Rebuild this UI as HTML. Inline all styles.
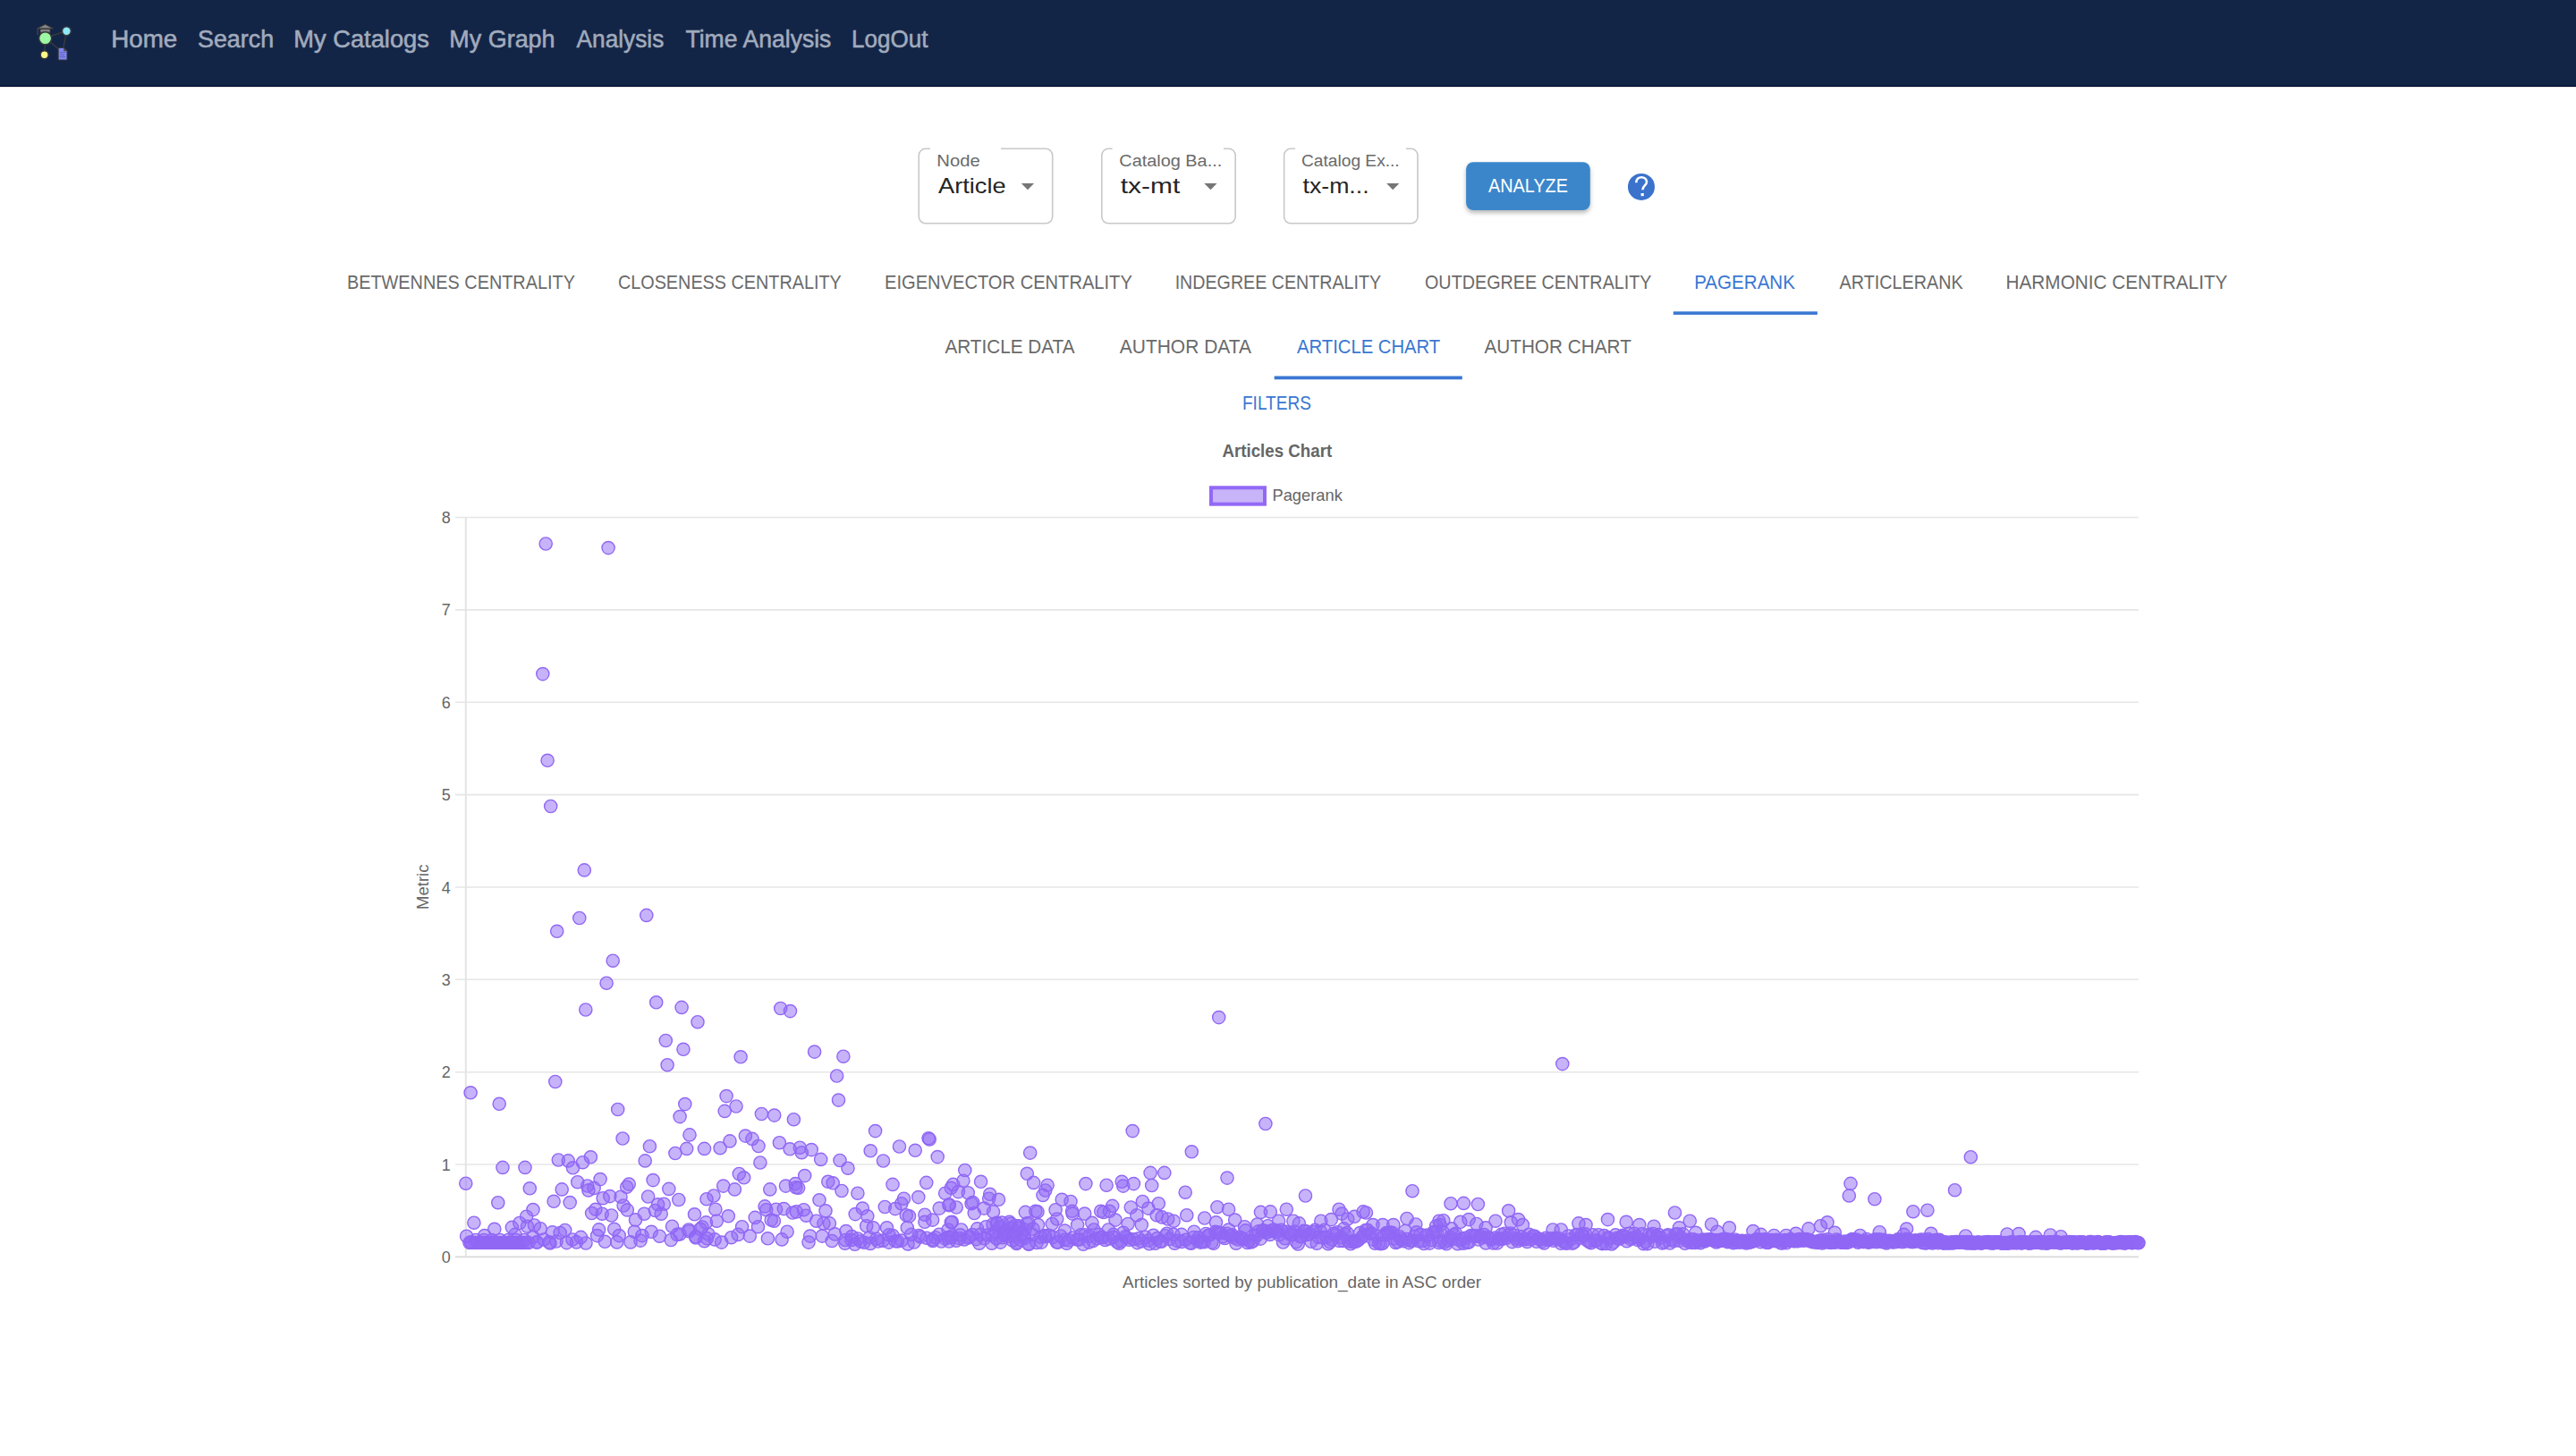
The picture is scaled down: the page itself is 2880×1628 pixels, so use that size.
<!DOCTYPE html>
<html><head><meta charset="utf-8"><style>
html,body{margin:0;padding:0;background:#fff;width:100%;height:100%;overflow:hidden}
svg{position:absolute;left:0;top:0;display:block;width:100vw;height:100vh}
text{font-family:"Liberation Sans",sans-serif}
</style></head><body>
<svg width="2880" height="1628" viewBox="0 0 2880 1628" preserveAspectRatio="none">
<rect x="0" y="0" width="2880" height="96" fill="#132547"/>
<rect x="0" y="95.8" width="2880" height="1.3" fill="#020e30"/>
<g stroke="#3a3a3a" stroke-width="1.4">
<line x1="50.6" y1="42.5" x2="74.5" y2="34.6"/>
<line x1="50.6" y1="42.5" x2="67" y2="56"/>
<line x1="74.5" y1="34.6" x2="71" y2="53"/>
<line x1="50.6" y1="42.5" x2="50" y2="58"/>
<path d="M41.3 31.9 L50.5 27.3 L59.7 31.9 Z" fill="#868686" stroke-width="1"/>
<rect x="45" y="32.5" width="11" height="3.8" fill="#848484" stroke-width="0.9"/>
<line x1="42.1" y1="32" x2="42.1" y2="39" stroke="#474747" stroke-width="1.3"/>
<circle cx="50.6" cy="42.8" r="7" fill="#9cf8a4"/>
<circle cx="74.4" cy="34.8" r="4.9" fill="#8ee8f8"/>
<circle cx="49.7" cy="61.3" r="4.4" fill="#fefa8a"/>
<path d="M65.2 53.5 L71.2 53.5 L75 57 L75 67 L65.2 67 Z" fill="#7f86f4" stroke-width="1"/>
<path d="M71.2 53.5 L75 57.2 L71.2 57.2 Z" fill="#4a4a4a" stroke="none"/>
<line x1="66.8" y1="58.7" x2="73" y2="58.7" stroke="#5a5fb0" stroke-width="0.9"/>
<line x1="66.8" y1="61.3" x2="72" y2="61.3" stroke="#5a5fb0" stroke-width="0.9"/>
<line x1="66.8" y1="63.6" x2="73" y2="63.6" stroke="#5a5fb0" stroke-width="0.9"/>
</g>
<rect x="1027.3" y="166.3" width="149.4" height="83.5" rx="7.5" fill="none" stroke="#c8c8c8" stroke-width="1.6"/>
<rect x="1039.8" y="163" width="79.2" height="7" fill="#fff"/>
<path d="M1141.8 205.1 L1156.1 205.1 L1149.0 212.3 Z" fill="#767676"/>
<rect x="1231.8" y="166.3" width="149.4" height="83.5" rx="7.5" fill="none" stroke="#c8c8c8" stroke-width="1.6"/>
<rect x="1243.6" y="163" width="124.4" height="7" fill="#fff"/>
<path d="M1346.3 205.1 L1360.6 205.1 L1353.5 212.3 Z" fill="#767676"/>
<rect x="1435.6" y="166.3" width="149.4" height="83.5" rx="7.5" fill="none" stroke="#c8c8c8" stroke-width="1.6"/>
<rect x="1448.0" y="163" width="124.0" height="7" fill="#fff"/>
<path d="M1550.1 205.1 L1564.4 205.1 L1557.2 212.3 Z" fill="#767676"/>
<defs><filter id="sh" x="-20%" y="-30%" width="140%" height="170%"><feDropShadow dx="0" dy="3" stdDeviation="2.5" flood-color="#000" flood-opacity="0.28"/></filter></defs>
<rect x="1639.1" y="181.2" width="138.7" height="53.8" rx="8" fill="#3b86cb" filter="url(#sh)"/>
<circle cx="1835" cy="208.9" r="15" fill="#3a72cc"/>
<path d="M1829.3 204.2 C1829.3 200.3 1832 198.2 1835.2 198.2 C1838.6 198.2 1841 200.4 1841 203.4 C1841 207.2 1836.4 207.6 1836.4 212.3" fill="none" stroke="#fff" stroke-width="2.6"/>
<rect x="1834.6" y="216" width="3.2" height="3.2" fill="#fff"/>
<rect x="1870.8" y="348.3" width="161.1" height="3.6" fill="#3a77d2"/>
<rect x="1424.7" y="420.5" width="210.1" height="3.8" fill="#3a77d2"/>

<line x1="509" y1="1405.40" x2="2391" y2="1405.40" stroke="#d9d9d9" stroke-width="1.6"/>
<line x1="509" y1="1302.04" x2="2391" y2="1302.04" stroke="#e6e6e6" stroke-width="1.6"/>
<line x1="509" y1="1198.68" x2="2391" y2="1198.68" stroke="#e6e6e6" stroke-width="1.6"/>
<line x1="509" y1="1095.32" x2="2391" y2="1095.32" stroke="#e6e6e6" stroke-width="1.6"/>
<line x1="509" y1="991.96" x2="2391" y2="991.96" stroke="#e6e6e6" stroke-width="1.6"/>
<line x1="509" y1="888.60" x2="2391" y2="888.60" stroke="#e6e6e6" stroke-width="1.6"/>
<line x1="509" y1="785.24" x2="2391" y2="785.24" stroke="#e6e6e6" stroke-width="1.6"/>
<line x1="509" y1="681.88" x2="2391" y2="681.88" stroke="#e6e6e6" stroke-width="1.6"/>
<line x1="509" y1="578.52" x2="2391" y2="578.52" stroke="#e6e6e6" stroke-width="1.6"/>
<line x1="520.8" y1="578.5" x2="520.8" y2="1405.4" stroke="#e4e4e4" stroke-width="2"/>
<text x="503.7" y="1411.9" font-size="18" fill="#666" text-anchor="end">0</text>
<text x="503.7" y="1308.5" font-size="18" fill="#666" text-anchor="end">1</text>
<text x="503.7" y="1205.2" font-size="18" fill="#666" text-anchor="end">2</text>
<text x="503.7" y="1101.8" font-size="18" fill="#666" text-anchor="end">3</text>
<text x="503.7" y="998.5" font-size="18" fill="#666" text-anchor="end">4</text>
<text x="503.7" y="895.1" font-size="18" fill="#666" text-anchor="end">5</text>
<text x="503.7" y="791.7" font-size="18" fill="#666" text-anchor="end">6</text>
<text x="503.7" y="688.4" font-size="18" fill="#666" text-anchor="end">7</text>
<text x="503.7" y="585.0" font-size="18" fill="#666" text-anchor="end">8</text>
<text transform="translate(479.1,1017) rotate(-90)" font-size="18.4" fill="#666" textLength="50.5" lengthAdjust="spacingAndGlyphs">Metric</text>
<rect x="1354" y="545.3" width="60" height="18.4" fill="#c8b4f8" stroke="#9368f5" stroke-width="4"/>
<g fill="rgba(144,103,245,0.5)" stroke="rgb(144,103,245)" stroke-width="1.4"><circle cx="520.8" cy="1323.2" r="7.1"/><circle cx="521.6" cy="1382.2" r="7.1"/><circle cx="525.0" cy="1389.5" r="7.1"/><circle cx="526.1" cy="1221.8" r="7.1"/><circle cx="526.5" cy="1388.9" r="7.1"/><circle cx="528.0" cy="1389.5" r="7.1"/><circle cx="529.9" cy="1367.2" r="7.1"/><circle cx="531.0" cy="1389.5" r="7.1"/><circle cx="532.0" cy="1386.5" r="7.1"/><circle cx="534.0" cy="1389.5" r="7.1"/><circle cx="537.0" cy="1389.5" r="7.1"/><circle cx="540.0" cy="1389.5" r="7.1"/><circle cx="541.0" cy="1386.5" r="7.1"/><circle cx="541.8" cy="1381.6" r="7.1"/><circle cx="543.0" cy="1389.5" r="7.1"/><circle cx="546.0" cy="1389.5" r="7.1"/><circle cx="549.0" cy="1389.5" r="7.1"/><circle cx="550.0" cy="1386.5" r="7.1"/><circle cx="552.0" cy="1389.5" r="7.1"/><circle cx="552.8" cy="1374.3" r="7.1"/><circle cx="555.0" cy="1389.5" r="7.1"/><circle cx="556.8" cy="1344.7" r="7.1"/><circle cx="558.0" cy="1389.5" r="7.1"/><circle cx="558.2" cy="1234.3" r="7.1"/><circle cx="559.0" cy="1386.5" r="7.1"/><circle cx="561.0" cy="1389.5" r="7.1"/><circle cx="562.0" cy="1305.4" r="7.1"/><circle cx="564.0" cy="1389.5" r="7.1"/><circle cx="567.0" cy="1389.5" r="7.1"/><circle cx="568.0" cy="1386.5" r="7.1"/><circle cx="570.0" cy="1389.5" r="7.1"/><circle cx="572.4" cy="1372.4" r="7.1"/><circle cx="573.0" cy="1389.5" r="7.1"/><circle cx="576.0" cy="1380.4" r="7.1"/><circle cx="576.0" cy="1389.5" r="7.1"/><circle cx="577.0" cy="1386.5" r="7.1"/><circle cx="579.0" cy="1389.5" r="7.1"/><circle cx="580.9" cy="1367.5" r="7.1"/><circle cx="582.0" cy="1389.5" r="7.1"/><circle cx="585.0" cy="1389.5" r="7.1"/><circle cx="586.0" cy="1386.5" r="7.1"/><circle cx="587.0" cy="1305.4" r="7.1"/><circle cx="588.0" cy="1389.5" r="7.1"/><circle cx="588.6" cy="1360.2" r="7.1"/><circle cx="589.5" cy="1371.2" r="7.1"/><circle cx="591.0" cy="1389.5" r="7.1"/><circle cx="592.3" cy="1328.8" r="7.1"/><circle cx="596.0" cy="1352.6" r="7.1"/><circle cx="596.0" cy="1383.0" r="7.1"/><circle cx="597.4" cy="1370.0" r="7.1"/><circle cx="600.0" cy="1389.0" r="7.1"/><circle cx="600.5" cy="1388.9" r="7.1"/><circle cx="604.1" cy="1373.7" r="7.1"/><circle cx="606.8" cy="753.6" r="7.1"/><circle cx="608.0" cy="1386.0" r="7.1"/><circle cx="610.2" cy="608.0" r="7.1"/><circle cx="612.1" cy="850.3" r="7.1"/><circle cx="613.9" cy="1388.9" r="7.1"/><circle cx="615.0" cy="1390.0" r="7.1"/><circle cx="615.7" cy="901.5" r="7.1"/><circle cx="617.6" cy="1377.9" r="7.1"/><circle cx="619.1" cy="1343.3" r="7.1"/><circle cx="620.8" cy="1209.5" r="7.1"/><circle cx="622.0" cy="1388.0" r="7.1"/><circle cx="622.7" cy="1041.3" r="7.1"/><circle cx="624.3" cy="1297.0" r="7.1"/><circle cx="626.2" cy="1378.5" r="7.1"/><circle cx="628.2" cy="1329.9" r="7.1"/><circle cx="631.7" cy="1375.5" r="7.1"/><circle cx="633.5" cy="1389.6" r="7.1"/><circle cx="635.3" cy="1297.9" r="7.1"/><circle cx="637.2" cy="1344.6" r="7.1"/><circle cx="640.0" cy="1386.0" r="7.1"/><circle cx="640.5" cy="1305.8" r="7.1"/><circle cx="644.5" cy="1388.9" r="7.1"/><circle cx="645.7" cy="1321.7" r="7.1"/><circle cx="647.8" cy="1026.5" r="7.1"/><circle cx="649.4" cy="1383.4" r="7.1"/><circle cx="651.5" cy="1299.7" r="7.1"/><circle cx="653.3" cy="972.9" r="7.1"/><circle cx="654.8" cy="1129.0" r="7.1"/><circle cx="655.0" cy="1390.0" r="7.1"/><circle cx="656.7" cy="1326.0" r="7.1"/><circle cx="657.9" cy="1330.9" r="7.1"/><circle cx="660.4" cy="1293.8" r="7.1"/><circle cx="661.6" cy="1356.5" r="7.1"/><circle cx="664.1" cy="1328.4" r="7.1"/><circle cx="665.9" cy="1352.3" r="7.1"/><circle cx="667.7" cy="1381.6" r="7.1"/><circle cx="669.6" cy="1374.9" r="7.1"/><circle cx="671.1" cy="1318.6" r="7.1"/><circle cx="673.2" cy="1357.2" r="7.1"/><circle cx="674.2" cy="1339.7" r="7.1"/><circle cx="676.3" cy="1388.3" r="7.1"/><circle cx="678.1" cy="1099.2" r="7.1"/><circle cx="680.1" cy="612.6" r="7.1"/><circle cx="681.8" cy="1337.6" r="7.1"/><circle cx="683.6" cy="1359.0" r="7.1"/><circle cx="685.2" cy="1074.2" r="7.1"/><circle cx="686.7" cy="1374.3" r="7.1"/><circle cx="689.7" cy="1388.9" r="7.1"/><circle cx="690.7" cy="1240.5" r="7.1"/><circle cx="692.2" cy="1381.6" r="7.1"/><circle cx="694.0" cy="1338.2" r="7.1"/><circle cx="696.1" cy="1273.0" r="7.1"/><circle cx="697.1" cy="1348.0" r="7.1"/><circle cx="700.7" cy="1327.2" r="7.1"/><circle cx="701.3" cy="1352.9" r="7.1"/><circle cx="703.2" cy="1324.1" r="7.1"/><circle cx="705.0" cy="1388.9" r="7.1"/><circle cx="709.3" cy="1377.3" r="7.1"/><circle cx="710.5" cy="1363.9" r="7.1"/><circle cx="716.0" cy="1387.1" r="7.1"/><circle cx="717.9" cy="1381.6" r="7.1"/><circle cx="720.3" cy="1357.2" r="7.1"/><circle cx="721.2" cy="1297.9" r="7.1"/><circle cx="722.8" cy="1023.4" r="7.1"/><circle cx="724.6" cy="1338.0" r="7.1"/><circle cx="726.4" cy="1281.7" r="7.1"/><circle cx="728.2" cy="1377.3" r="7.1"/><circle cx="730.1" cy="1319.6" r="7.1"/><circle cx="732.5" cy="1353.5" r="7.1"/><circle cx="733.7" cy="1120.8" r="7.1"/><circle cx="735.6" cy="1346.8" r="7.1"/><circle cx="737.4" cy="1382.2" r="7.1"/><circle cx="739.2" cy="1357.2" r="7.1"/><circle cx="742.3" cy="1346.2" r="7.1"/><circle cx="744.3" cy="1163.5" r="7.1"/><circle cx="746.1" cy="1190.7" r="7.1"/><circle cx="747.8" cy="1329.4" r="7.1"/><circle cx="750.2" cy="1386.5" r="7.1"/><circle cx="751.5" cy="1371.2" r="7.1"/><circle cx="754.9" cy="1289.5" r="7.1"/><circle cx="757.0" cy="1380.4" r="7.1"/><circle cx="758.8" cy="1341.5" r="7.1"/><circle cx="760.0" cy="1380.0" r="7.1"/><circle cx="760.1" cy="1248.6" r="7.1"/><circle cx="762.1" cy="1126.4" r="7.1"/><circle cx="764.0" cy="1173.3" r="7.1"/><circle cx="765.8" cy="1234.6" r="7.1"/><circle cx="767.7" cy="1284.4" r="7.1"/><circle cx="770.0" cy="1375.0" r="7.1"/><circle cx="770.4" cy="1376.7" r="7.1"/><circle cx="771.0" cy="1268.9" r="7.1"/><circle cx="776.5" cy="1357.8" r="7.1"/><circle cx="777.8" cy="1382.8" r="7.1"/><circle cx="778.0" cy="1384.0" r="7.1"/><circle cx="780.0" cy="1142.7" r="7.1"/><circle cx="782.7" cy="1374.3" r="7.1"/><circle cx="785.0" cy="1372.0" r="7.1"/><circle cx="787.5" cy="1284.4" r="7.1"/><circle cx="787.5" cy="1387.7" r="7.1"/><circle cx="789.4" cy="1366.9" r="7.1"/><circle cx="790.0" cy="1340.7" r="7.1"/><circle cx="790.4" cy="1384.8" r="7.1"/><circle cx="792.0" cy="1380.0" r="7.1"/><circle cx="798.0" cy="1337.0" r="7.1"/><circle cx="799.1" cy="1385.9" r="7.1"/><circle cx="799.9" cy="1352.2" r="7.1"/><circle cx="801.3" cy="1365.2" r="7.1"/><circle cx="805.1" cy="1283.7" r="7.1"/><circle cx="806.7" cy="1389.1" r="7.1"/><circle cx="808.7" cy="1326.1" r="7.1"/><circle cx="810.2" cy="1242.4" r="7.1"/><circle cx="812.1" cy="1225.6" r="7.1"/><circle cx="814.3" cy="1359.8" r="7.1"/><circle cx="816.0" cy="1275.9" r="7.1"/><circle cx="817.6" cy="1383.7" r="7.1"/><circle cx="821.4" cy="1329.9" r="7.1"/><circle cx="823.0" cy="1237.0" r="7.1"/><circle cx="825.2" cy="1380.4" r="7.1"/><circle cx="826.3" cy="1312.5" r="7.1"/><circle cx="828.1" cy="1181.8" r="7.1"/><circle cx="829.6" cy="1371.7" r="7.1"/><circle cx="831.7" cy="1316.8" r="7.1"/><circle cx="833.4" cy="1270.1" r="7.1"/><circle cx="838.3" cy="1382.1" r="7.1"/><circle cx="841.0" cy="1273.4" r="7.1"/><circle cx="844.2" cy="1361.4" r="7.1"/><circle cx="847.5" cy="1371.7" r="7.1"/><circle cx="848.0" cy="1281.5" r="7.1"/><circle cx="849.9" cy="1300.0" r="7.1"/><circle cx="851.4" cy="1245.5" r="7.1"/><circle cx="855.1" cy="1348.9" r="7.1"/><circle cx="856.7" cy="1352.7" r="7.1"/><circle cx="858.4" cy="1384.8" r="7.1"/><circle cx="860.8" cy="1329.9" r="7.1"/><circle cx="862.2" cy="1364.1" r="7.1"/><circle cx="865.4" cy="1365.2" r="7.1"/><circle cx="865.7" cy="1247.1" r="7.1"/><circle cx="867.6" cy="1352.2" r="7.1"/><circle cx="871.4" cy="1277.7" r="7.1"/><circle cx="872.7" cy="1127.5" r="7.1"/><circle cx="874.1" cy="1385.9" r="7.1"/><circle cx="876.3" cy="1351.6" r="7.1"/><circle cx="878.5" cy="1326.1" r="7.1"/><circle cx="880.1" cy="1377.2" r="7.1"/><circle cx="883.1" cy="1284.8" r="7.1"/><circle cx="883.5" cy="1130.6" r="7.1"/><circle cx="886.1" cy="1356.0" r="7.1"/><circle cx="887.4" cy="1251.7" r="7.1"/><circle cx="889.3" cy="1323.6" r="7.1"/><circle cx="889.9" cy="1327.7" r="7.1"/><circle cx="890.4" cy="1354.9" r="7.1"/><circle cx="892.6" cy="1328.3" r="7.1"/><circle cx="894.3" cy="1283.2" r="7.1"/><circle cx="896.3" cy="1288.7" r="7.1"/><circle cx="898.6" cy="1352.7" r="7.1"/><circle cx="899.7" cy="1314.6" r="7.1"/><circle cx="901.3" cy="1359.2" r="7.1"/><circle cx="904.0" cy="1389.1" r="7.1"/><circle cx="905.7" cy="1382.1" r="7.1"/><circle cx="907.2" cy="1285.6" r="7.1"/><circle cx="910.6" cy="1176.1" r="7.1"/><circle cx="912.7" cy="1365.2" r="7.1"/><circle cx="916.0" cy="1341.8" r="7.1"/><circle cx="917.7" cy="1296.4" r="7.1"/><circle cx="919.2" cy="1382.1" r="7.1"/><circle cx="920.9" cy="1367.9" r="7.1"/><circle cx="923.0" cy="1353.8" r="7.1"/><circle cx="925.8" cy="1321.3" r="7.1"/><circle cx="927.4" cy="1367.9" r="7.1"/><circle cx="930.1" cy="1387.5" r="7.1"/><circle cx="931.2" cy="1322.8" r="7.1"/><circle cx="933.4" cy="1379.9" r="7.1"/><circle cx="935.6" cy="1203.0" r="7.1"/><circle cx="937.5" cy="1230.1" r="7.1"/><circle cx="939.0" cy="1297.5" r="7.1"/><circle cx="941.0" cy="1331.5" r="7.1"/><circle cx="942.9" cy="1181.2" r="7.1"/><circle cx="944.8" cy="1390.2" r="7.1"/><circle cx="945.0" cy="1386.5" r="7.1"/><circle cx="945.9" cy="1376.6" r="7.1"/><circle cx="948.0" cy="1306.2" r="7.1"/><circle cx="952.0" cy="1386.4" r="7.1"/><circle cx="952.4" cy="1382.6" r="7.1"/><circle cx="955.7" cy="1391.3" r="7.1"/><circle cx="956.2" cy="1357.6" r="7.1"/><circle cx="958.9" cy="1334.2" r="7.1"/><circle cx="959.0" cy="1385.0" r="7.1"/><circle cx="962.2" cy="1388.0" r="7.1"/><circle cx="964.3" cy="1351.1" r="7.1"/><circle cx="966.0" cy="1389.2" r="7.1"/><circle cx="968.7" cy="1370.7" r="7.1"/><circle cx="969.8" cy="1359.8" r="7.1"/><circle cx="972.0" cy="1383.7" r="7.1"/><circle cx="973.0" cy="1390.4" r="7.1"/><circle cx="973.2" cy="1286.8" r="7.1"/><circle cx="976.3" cy="1372.8" r="7.1"/><circle cx="978.6" cy="1264.6" r="7.1"/><circle cx="980.0" cy="1385.2" r="7.1"/><circle cx="981.7" cy="1388.0" r="7.1"/><circle cx="987.0" cy="1387.3" r="7.1"/><circle cx="987.5" cy="1298.0" r="7.1"/><circle cx="989.3" cy="1349.5" r="7.1"/><circle cx="991.5" cy="1372.8" r="7.1"/><circle cx="993.7" cy="1389.1" r="7.1"/><circle cx="994.0" cy="1380.7" r="7.1"/><circle cx="998.0" cy="1324.4" r="7.1"/><circle cx="998.0" cy="1381.5" r="7.1"/><circle cx="1000.8" cy="1351.6" r="7.1"/><circle cx="1001.0" cy="1387.7" r="7.1"/><circle cx="1003.5" cy="1388.0" r="7.1"/><circle cx="1005.5" cy="1282.0" r="7.1"/><circle cx="1007.8" cy="1345.7" r="7.1"/><circle cx="1008.0" cy="1387.1" r="7.1"/><circle cx="1010.5" cy="1340.2" r="7.1"/><circle cx="1013.3" cy="1358.7" r="7.1"/><circle cx="1014.3" cy="1372.8" r="7.1"/><circle cx="1015.0" cy="1390.9" r="7.1"/><circle cx="1016.5" cy="1359.8" r="7.1"/><circle cx="1018.7" cy="1380.4" r="7.1"/><circle cx="1022.0" cy="1389.0" r="7.1"/><circle cx="1023.2" cy="1286.3" r="7.1"/><circle cx="1026.8" cy="1338.6" r="7.1"/><circle cx="1027.4" cy="1381.5" r="7.1"/><circle cx="1029.0" cy="1383.1" r="7.1"/><circle cx="1033.9" cy="1358.2" r="7.1"/><circle cx="1033.9" cy="1366.3" r="7.1"/><circle cx="1035.7" cy="1322.4" r="7.1"/><circle cx="1036.0" cy="1384.2" r="7.1"/><circle cx="1038.1" cy="1272.7" r="7.1"/><circle cx="1039.2" cy="1273.9" r="7.1"/><circle cx="1042.6" cy="1364.1" r="7.1"/><circle cx="1042.6" cy="1385.9" r="7.1"/><circle cx="1043.0" cy="1387.4" r="7.1"/><circle cx="1045.9" cy="1383.7" r="7.1"/><circle cx="1048.2" cy="1293.6" r="7.1"/><circle cx="1050.0" cy="1380.2" r="7.1"/><circle cx="1050.2" cy="1351.1" r="7.1"/><circle cx="1052.4" cy="1388.0" r="7.1"/><circle cx="1056.7" cy="1334.2" r="7.1"/><circle cx="1057.0" cy="1385.1" r="7.1"/><circle cx="1060.0" cy="1375.0" r="7.1"/><circle cx="1060.0" cy="1383.6" r="7.1"/><circle cx="1061.1" cy="1346.7" r="7.1"/><circle cx="1061.1" cy="1347.8" r="7.1"/><circle cx="1061.1" cy="1388.0" r="7.1"/><circle cx="1063.3" cy="1328.3" r="7.1"/><circle cx="1063.3" cy="1366.8" r="7.1"/><circle cx="1063.3" cy="1383.7" r="7.1"/><circle cx="1064.3" cy="1366.3" r="7.1"/><circle cx="1064.5" cy="1381.7" r="7.1"/><circle cx="1065.6" cy="1324.4" r="7.1"/><circle cx="1069.0" cy="1387.2" r="7.1"/><circle cx="1069.2" cy="1350.0" r="7.1"/><circle cx="1071.4" cy="1332.6" r="7.1"/><circle cx="1073.0" cy="1384.8" r="7.1"/><circle cx="1073.5" cy="1380.8" r="7.1"/><circle cx="1074.7" cy="1375.0" r="7.1"/><circle cx="1076.9" cy="1320.2" r="7.1"/><circle cx="1078.0" cy="1385.9" r="7.1"/><circle cx="1078.8" cy="1308.5" r="7.1"/><circle cx="1082.3" cy="1333.7" r="7.1"/><circle cx="1082.5" cy="1384.0" r="7.1"/><circle cx="1083.9" cy="1382.6" r="7.1"/><circle cx="1086.1" cy="1345.7" r="7.1"/><circle cx="1087.0" cy="1380.6" r="7.1"/><circle cx="1087.7" cy="1344.6" r="7.1"/><circle cx="1089.3" cy="1356.5" r="7.1"/><circle cx="1091.5" cy="1385.6" r="7.1"/><circle cx="1092.6" cy="1373.9" r="7.1"/><circle cx="1094.8" cy="1390.2" r="7.1"/><circle cx="1096.0" cy="1380.4" r="7.1"/><circle cx="1096.6" cy="1321.3" r="7.1"/><circle cx="1100.2" cy="1351.1" r="7.1"/><circle cx="1100.5" cy="1384.8" r="7.1"/><circle cx="1102.4" cy="1371.7" r="7.1"/><circle cx="1105.0" cy="1380.8" r="7.1"/><circle cx="1105.7" cy="1340.2" r="7.1"/><circle cx="1106.7" cy="1335.3" r="7.1"/><circle cx="1108.9" cy="1390.2" r="7.1"/><circle cx="1109.5" cy="1381.0" r="7.1"/><circle cx="1110.0" cy="1369.0" r="7.1"/><circle cx="1110.5" cy="1354.9" r="7.1"/><circle cx="1113.0" cy="1377.0" r="7.1"/><circle cx="1114.0" cy="1384.7" r="7.1"/><circle cx="1114.3" cy="1367.4" r="7.1"/><circle cx="1115.0" cy="1368.1" r="7.1"/><circle cx="1116.5" cy="1341.3" r="7.1"/><circle cx="1118.0" cy="1372.0" r="7.1"/><circle cx="1118.5" cy="1389.1" r="7.1"/><circle cx="1120.0" cy="1367.1" r="7.1"/><circle cx="1120.9" cy="1383.7" r="7.1"/><circle cx="1122.0" cy="1380.0" r="7.1"/><circle cx="1123.0" cy="1381.4" r="7.1"/><circle cx="1125.0" cy="1379.8" r="7.1"/><circle cx="1125.2" cy="1376.1" r="7.1"/><circle cx="1127.5" cy="1382.5" r="7.1"/><circle cx="1128.5" cy="1366.3" r="7.1"/><circle cx="1130.0" cy="1373.0" r="7.1"/><circle cx="1130.0" cy="1368.3" r="7.1"/><circle cx="1132.0" cy="1386.9" r="7.1"/><circle cx="1133.0" cy="1382.0" r="7.1"/><circle cx="1135.0" cy="1370.5" r="7.1"/><circle cx="1136.1" cy="1377.2" r="7.1"/><circle cx="1136.5" cy="1390.4" r="7.1"/><circle cx="1137.2" cy="1389.1" r="7.1"/><circle cx="1139.3" cy="1370.7" r="7.1"/><circle cx="1140.0" cy="1373.0" r="7.1"/><circle cx="1141.0" cy="1380.0" r="7.1"/><circle cx="1141.0" cy="1386.3" r="7.1"/><circle cx="1145.0" cy="1381.7" r="7.1"/><circle cx="1145.5" cy="1384.4" r="7.1"/><circle cx="1145.9" cy="1375.0" r="7.1"/><circle cx="1146.4" cy="1355.4" r="7.1"/><circle cx="1148.0" cy="1368.0" r="7.1"/><circle cx="1148.3" cy="1312.3" r="7.1"/><circle cx="1150.0" cy="1390.7" r="7.1"/><circle cx="1150.0" cy="1367.5" r="7.1"/><circle cx="1150.2" cy="1391.3" r="7.1"/><circle cx="1151.7" cy="1289.1" r="7.1"/><circle cx="1154.5" cy="1380.5" r="7.1"/><circle cx="1155.0" cy="1374.1" r="7.1"/><circle cx="1155.6" cy="1322.4" r="7.1"/><circle cx="1157.8" cy="1354.3" r="7.1"/><circle cx="1159.0" cy="1389.4" r="7.1"/><circle cx="1160.0" cy="1354.9" r="7.1"/><circle cx="1160.5" cy="1369.6" r="7.1"/><circle cx="1163.5" cy="1383.2" r="7.1"/><circle cx="1164.3" cy="1389.1" r="7.1"/><circle cx="1166.0" cy="1336.4" r="7.1"/><circle cx="1168.0" cy="1381.6" r="7.1"/><circle cx="1168.7" cy="1331.0" r="7.1"/><circle cx="1168.7" cy="1382.6" r="7.1"/><circle cx="1171.1" cy="1325.2" r="7.1"/><circle cx="1172.5" cy="1381.3" r="7.1"/><circle cx="1176.3" cy="1368.5" r="7.1"/><circle cx="1177.0" cy="1383.4" r="7.1"/><circle cx="1180.1" cy="1352.7" r="7.1"/><circle cx="1181.5" cy="1389.0" r="7.1"/><circle cx="1181.7" cy="1363.0" r="7.1"/><circle cx="1182.8" cy="1389.1" r="7.1"/><circle cx="1186.0" cy="1382.0" r="7.1"/><circle cx="1187.2" cy="1341.3" r="7.1"/><circle cx="1190.4" cy="1376.1" r="7.1"/><circle cx="1190.5" cy="1386.4" r="7.1"/><circle cx="1192.6" cy="1390.2" r="7.1"/><circle cx="1195.0" cy="1387.0" r="7.1"/><circle cx="1197.0" cy="1343.5" r="7.1"/><circle cx="1198.6" cy="1354.3" r="7.1"/><circle cx="1199.1" cy="1357.1" r="7.1"/><circle cx="1199.5" cy="1384.1" r="7.1"/><circle cx="1204.0" cy="1386.0" r="7.1"/><circle cx="1204.6" cy="1369.6" r="7.1"/><circle cx="1206.7" cy="1385.9" r="7.1"/><circle cx="1208.5" cy="1380.7" r="7.1"/><circle cx="1211.1" cy="1391.3" r="7.1"/><circle cx="1212.7" cy="1357.1" r="7.1"/><circle cx="1213.0" cy="1380.7" r="7.1"/><circle cx="1213.9" cy="1323.6" r="7.1"/><circle cx="1217.5" cy="1382.3" r="7.1"/><circle cx="1217.6" cy="1389.1" r="7.1"/><circle cx="1220.9" cy="1367.4" r="7.1"/><circle cx="1222.0" cy="1387.5" r="7.1"/><circle cx="1223.0" cy="1375.0" r="7.1"/><circle cx="1226.5" cy="1384.7" r="7.1"/><circle cx="1228.5" cy="1380.4" r="7.1"/><circle cx="1230.7" cy="1354.3" r="7.1"/><circle cx="1231.0" cy="1383.5" r="7.1"/><circle cx="1232.8" cy="1383.7" r="7.1"/><circle cx="1233.9" cy="1355.4" r="7.1"/><circle cx="1235.5" cy="1386.4" r="7.1"/><circle cx="1237.1" cy="1325.2" r="7.1"/><circle cx="1239.3" cy="1375.0" r="7.1"/><circle cx="1240.0" cy="1385.0" r="7.1"/><circle cx="1240.4" cy="1354.3" r="7.1"/><circle cx="1243.7" cy="1348.4" r="7.1"/><circle cx="1244.5" cy="1383.3" r="7.1"/><circle cx="1244.8" cy="1380.4" r="7.1"/><circle cx="1247.0" cy="1364.1" r="7.1"/><circle cx="1249.0" cy="1388.7" r="7.1"/><circle cx="1251.3" cy="1390.2" r="7.1"/><circle cx="1253.5" cy="1387.7" r="7.1"/><circle cx="1254.2" cy="1321.3" r="7.1"/><circle cx="1255.7" cy="1326.1" r="7.1"/><circle cx="1255.7" cy="1378.3" r="7.1"/><circle cx="1258.0" cy="1382.7" r="7.1"/><circle cx="1260.0" cy="1383.7" r="7.1"/><circle cx="1261.1" cy="1368.5" r="7.1"/><circle cx="1262.5" cy="1386.3" r="7.1"/><circle cx="1264.3" cy="1350.0" r="7.1"/><circle cx="1266.2" cy="1264.6" r="7.1"/><circle cx="1267.0" cy="1385.8" r="7.1"/><circle cx="1267.4" cy="1323.6" r="7.1"/><circle cx="1270.9" cy="1358.7" r="7.1"/><circle cx="1271.5" cy="1389.6" r="7.1"/><circle cx="1273.0" cy="1384.8" r="7.1"/><circle cx="1276.0" cy="1388.0" r="7.1"/><circle cx="1276.3" cy="1369.6" r="7.1"/><circle cx="1277.4" cy="1343.5" r="7.1"/><circle cx="1280.5" cy="1383.2" r="7.1"/><circle cx="1283.9" cy="1351.1" r="7.1"/><circle cx="1283.9" cy="1387.0" r="7.1"/><circle cx="1285.0" cy="1390.8" r="7.1"/><circle cx="1286.1" cy="1311.4" r="7.1"/><circle cx="1287.7" cy="1325.5" r="7.1"/><circle cx="1289.5" cy="1381.3" r="7.1"/><circle cx="1291.5" cy="1390.2" r="7.1"/><circle cx="1293.2" cy="1358.7" r="7.1"/><circle cx="1294.0" cy="1384.6" r="7.1"/><circle cx="1295.3" cy="1345.7" r="7.1"/><circle cx="1297.0" cy="1388.0" r="7.1"/><circle cx="1298.5" cy="1388.3" r="7.1"/><circle cx="1299.1" cy="1360.9" r="7.1"/><circle cx="1301.8" cy="1311.4" r="7.1"/><circle cx="1303.0" cy="1381.7" r="7.1"/><circle cx="1304.6" cy="1379.3" r="7.1"/><circle cx="1305.7" cy="1363.0" r="7.1"/><circle cx="1307.5" cy="1385.4" r="7.1"/><circle cx="1312.0" cy="1380.4" r="7.1"/><circle cx="1312.2" cy="1365.2" r="7.1"/><circle cx="1313.3" cy="1390.2" r="7.1"/><circle cx="1316.5" cy="1387.4" r="7.1"/><circle cx="1320.9" cy="1380.4" r="7.1"/><circle cx="1321.0" cy="1388.4" r="7.1"/><circle cx="1325.2" cy="1333.2" r="7.1"/><circle cx="1325.5" cy="1386.3" r="7.1"/><circle cx="1326.8" cy="1358.7" r="7.1"/><circle cx="1330.0" cy="1389.6" r="7.1"/><circle cx="1331.7" cy="1390.2" r="7.1"/><circle cx="1332.3" cy="1287.8" r="7.1"/><circle cx="1334.5" cy="1383.5" r="7.1"/><circle cx="1335.0" cy="1377.2" r="7.1"/><circle cx="1339.0" cy="1387.6" r="7.1"/><circle cx="1340.0" cy="1383.8" r="7.1"/><circle cx="1342.1" cy="1389.1" r="7.1"/><circle cx="1344.2" cy="1388.1" r="7.1"/><circle cx="1346.3" cy="1388.8" r="7.1"/><circle cx="1346.7" cy="1362.0" r="7.1"/><circle cx="1348.4" cy="1379.5" r="7.1"/><circle cx="1350.5" cy="1381.6" r="7.1"/><circle cx="1352.6" cy="1380.7" r="7.1"/><circle cx="1354.7" cy="1389.1" r="7.1"/><circle cx="1356.8" cy="1390.3" r="7.1"/><circle cx="1358.9" cy="1377.4" r="7.1"/><circle cx="1359.5" cy="1366.8" r="7.1"/><circle cx="1360.9" cy="1349.7" r="7.1"/><circle cx="1361.0" cy="1377.8" r="7.1"/><circle cx="1362.7" cy="1137.6" r="7.1"/><circle cx="1363.1" cy="1378.7" r="7.1"/><circle cx="1365.2" cy="1378.7" r="7.1"/><circle cx="1367.3" cy="1382.8" r="7.1"/><circle cx="1369.4" cy="1384.4" r="7.1"/><circle cx="1371.5" cy="1379.2" r="7.1"/><circle cx="1372.0" cy="1317.1" r="7.1"/><circle cx="1373.6" cy="1375.1" r="7.1"/><circle cx="1373.6" cy="1352.2" r="7.1"/><circle cx="1375.7" cy="1381.7" r="7.1"/><circle cx="1377.8" cy="1380.9" r="7.1"/><circle cx="1379.9" cy="1384.1" r="7.1"/><circle cx="1380.7" cy="1364.1" r="7.1"/><circle cx="1382.0" cy="1390.2" r="7.1"/><circle cx="1384.1" cy="1386.0" r="7.1"/><circle cx="1386.2" cy="1383.2" r="7.1"/><circle cx="1388.3" cy="1384.9" r="7.1"/><circle cx="1390.4" cy="1385.8" r="7.1"/><circle cx="1391.5" cy="1371.7" r="7.1"/><circle cx="1392.5" cy="1375.9" r="7.1"/><circle cx="1394.6" cy="1389.4" r="7.1"/><circle cx="1396.7" cy="1387.5" r="7.1"/><circle cx="1398.8" cy="1389.0" r="7.1"/><circle cx="1400.9" cy="1387.8" r="7.1"/><circle cx="1403.0" cy="1381.3" r="7.1"/><circle cx="1405.1" cy="1381.4" r="7.1"/><circle cx="1405.7" cy="1369.0" r="7.1"/><circle cx="1407.2" cy="1376.7" r="7.1"/><circle cx="1409.3" cy="1385.1" r="7.1"/><circle cx="1409.5" cy="1355.4" r="7.1"/><circle cx="1411.4" cy="1376.0" r="7.1"/><circle cx="1413.5" cy="1376.1" r="7.1"/><circle cx="1414.9" cy="1256.5" r="7.1"/><circle cx="1415.6" cy="1378.3" r="7.1"/><circle cx="1417.6" cy="1370.7" r="7.1"/><circle cx="1417.7" cy="1377.6" r="7.1"/><circle cx="1419.8" cy="1380.4" r="7.1"/><circle cx="1420.3" cy="1354.9" r="7.1"/><circle cx="1421.9" cy="1375.8" r="7.1"/><circle cx="1424.0" cy="1375.0" r="7.1"/><circle cx="1426.1" cy="1377.4" r="7.1"/><circle cx="1428.2" cy="1376.6" r="7.1"/><circle cx="1429.6" cy="1365.2" r="7.1"/><circle cx="1430.3" cy="1380.8" r="7.1"/><circle cx="1432.4" cy="1375.4" r="7.1"/><circle cx="1434.5" cy="1389.0" r="7.1"/><circle cx="1436.6" cy="1384.8" r="7.1"/><circle cx="1438.3" cy="1352.2" r="7.1"/><circle cx="1438.7" cy="1377.4" r="7.1"/><circle cx="1440.8" cy="1379.0" r="7.1"/><circle cx="1442.9" cy="1380.6" r="7.1"/><circle cx="1445.0" cy="1380.8" r="7.1"/><circle cx="1445.9" cy="1365.2" r="7.1"/><circle cx="1447.1" cy="1377.0" r="7.1"/><circle cx="1449.2" cy="1388.6" r="7.1"/><circle cx="1451.3" cy="1390.9" r="7.1"/><circle cx="1452.4" cy="1367.9" r="7.1"/><circle cx="1453.4" cy="1382.5" r="7.1"/><circle cx="1455.5" cy="1382.7" r="7.1"/><circle cx="1457.6" cy="1376.4" r="7.1"/><circle cx="1459.5" cy="1337.0" r="7.1"/><circle cx="1459.7" cy="1376.6" r="7.1"/><circle cx="1461.8" cy="1380.5" r="7.1"/><circle cx="1463.9" cy="1379.2" r="7.1"/><circle cx="1466.0" cy="1388.3" r="7.1"/><circle cx="1468.1" cy="1377.6" r="7.1"/><circle cx="1470.2" cy="1375.4" r="7.1"/><circle cx="1472.3" cy="1390.2" r="7.1"/><circle cx="1474.4" cy="1383.5" r="7.1"/><circle cx="1476.5" cy="1377.3" r="7.1"/><circle cx="1476.8" cy="1365.2" r="7.1"/><circle cx="1478.6" cy="1383.7" r="7.1"/><circle cx="1480.7" cy="1375.4" r="7.1"/><circle cx="1482.8" cy="1383.4" r="7.1"/><circle cx="1484.9" cy="1390.7" r="7.1"/><circle cx="1487.0" cy="1388.8" r="7.1"/><circle cx="1488.3" cy="1363.6" r="7.1"/><circle cx="1489.1" cy="1386.1" r="7.1"/><circle cx="1491.2" cy="1379.2" r="7.1"/><circle cx="1493.3" cy="1380.9" r="7.1"/><circle cx="1495.4" cy="1377.7" r="7.1"/><circle cx="1497.0" cy="1352.2" r="7.1"/><circle cx="1497.5" cy="1387.4" r="7.1"/><circle cx="1499.6" cy="1383.5" r="7.1"/><circle cx="1500.2" cy="1357.1" r="7.1"/><circle cx="1501.7" cy="1387.5" r="7.1"/><circle cx="1502.4" cy="1373.9" r="7.1"/><circle cx="1503.8" cy="1380.3" r="7.1"/><circle cx="1505.9" cy="1378.6" r="7.1"/><circle cx="1506.7" cy="1363.0" r="7.1"/><circle cx="1508.0" cy="1388.0" r="7.1"/><circle cx="1510.1" cy="1390.8" r="7.1"/><circle cx="1512.2" cy="1388.6" r="7.1"/><circle cx="1514.3" cy="1387.9" r="7.1"/><circle cx="1514.3" cy="1360.3" r="7.1"/><circle cx="1516.4" cy="1388.1" r="7.1"/><circle cx="1518.5" cy="1386.8" r="7.1"/><circle cx="1520.6" cy="1378.6" r="7.1"/><circle cx="1522.7" cy="1383.3" r="7.1"/><circle cx="1524.1" cy="1354.9" r="7.1"/><circle cx="1524.8" cy="1380.7" r="7.1"/><circle cx="1526.9" cy="1375.5" r="7.1"/><circle cx="1527.4" cy="1356.0" r="7.1"/><circle cx="1529.0" cy="1375.4" r="7.1"/><circle cx="1531.1" cy="1379.5" r="7.1"/><circle cx="1533.2" cy="1379.1" r="7.1"/><circle cx="1535.0" cy="1369.6" r="7.1"/><circle cx="1535.3" cy="1386.1" r="7.1"/><circle cx="1537.4" cy="1390.3" r="7.1"/><circle cx="1539.5" cy="1382.2" r="7.1"/><circle cx="1541.6" cy="1390.0" r="7.1"/><circle cx="1543.7" cy="1390.8" r="7.1"/><circle cx="1545.8" cy="1390.3" r="7.1"/><circle cx="1545.9" cy="1369.6" r="7.1"/><circle cx="1547.9" cy="1380.8" r="7.1"/><circle cx="1550.0" cy="1378.5" r="7.1"/><circle cx="1552.1" cy="1378.6" r="7.1"/><circle cx="1554.2" cy="1378.1" r="7.1"/><circle cx="1556.3" cy="1378.3" r="7.1"/><circle cx="1557.8" cy="1369.6" r="7.1"/><circle cx="1558.4" cy="1385.0" r="7.1"/><circle cx="1560.5" cy="1389.4" r="7.1"/><circle cx="1562.6" cy="1388.4" r="7.1"/><circle cx="1564.7" cy="1382.7" r="7.1"/><circle cx="1566.8" cy="1385.4" r="7.1"/><circle cx="1568.9" cy="1387.8" r="7.1"/><circle cx="1571.0" cy="1376.4" r="7.1"/><circle cx="1573.0" cy="1362.5" r="7.1"/><circle cx="1573.1" cy="1385.6" r="7.1"/><circle cx="1575.2" cy="1389.6" r="7.1"/><circle cx="1577.3" cy="1387.5" r="7.1"/><circle cx="1579.0" cy="1331.7" r="7.1"/><circle cx="1579.4" cy="1387.0" r="7.1"/><circle cx="1581.5" cy="1382.6" r="7.1"/><circle cx="1582.8" cy="1369.0" r="7.1"/><circle cx="1583.6" cy="1377.9" r="7.1"/><circle cx="1585.7" cy="1387.6" r="7.1"/><circle cx="1587.8" cy="1380.3" r="7.1"/><circle cx="1589.9" cy="1387.8" r="7.1"/><circle cx="1592.0" cy="1390.5" r="7.1"/><circle cx="1594.1" cy="1381.3" r="7.1"/><circle cx="1596.2" cy="1381.4" r="7.1"/><circle cx="1598.3" cy="1390.1" r="7.1"/><circle cx="1600.4" cy="1386.6" r="7.1"/><circle cx="1602.5" cy="1377.7" r="7.1"/><circle cx="1604.6" cy="1377.0" r="7.1"/><circle cx="1605.7" cy="1370.7" r="7.1"/><circle cx="1606.7" cy="1377.4" r="7.1"/><circle cx="1608.8" cy="1389.5" r="7.1"/><circle cx="1608.9" cy="1365.2" r="7.1"/><circle cx="1610.0" cy="1369.6" r="7.1"/><circle cx="1610.9" cy="1387.9" r="7.1"/><circle cx="1613.0" cy="1377.3" r="7.1"/><circle cx="1613.8" cy="1364.7" r="7.1"/><circle cx="1615.0" cy="1388.9" r="7.1"/><circle cx="1617.1" cy="1390.8" r="7.1"/><circle cx="1619.2" cy="1386.9" r="7.1"/><circle cx="1621.3" cy="1383.2" r="7.1"/><circle cx="1622.0" cy="1345.7" r="7.1"/><circle cx="1623.0" cy="1373.9" r="7.1"/><circle cx="1623.4" cy="1385.6" r="7.1"/><circle cx="1625.5" cy="1380.6" r="7.1"/><circle cx="1627.6" cy="1379.2" r="7.1"/><circle cx="1629.7" cy="1390.7" r="7.1"/><circle cx="1631.8" cy="1386.8" r="7.1"/><circle cx="1632.8" cy="1366.3" r="7.1"/><circle cx="1633.9" cy="1385.3" r="7.1"/><circle cx="1636.0" cy="1390.2" r="7.1"/><circle cx="1636.4" cy="1345.4" r="7.1"/><circle cx="1638.1" cy="1384.2" r="7.1"/><circle cx="1640.2" cy="1389.5" r="7.1"/><circle cx="1642.1" cy="1363.6" r="7.1"/><circle cx="1642.3" cy="1388.9" r="7.1"/><circle cx="1644.4" cy="1381.5" r="7.1"/><circle cx="1646.5" cy="1382.0" r="7.1"/><circle cx="1648.6" cy="1382.5" r="7.1"/><circle cx="1650.7" cy="1381.9" r="7.1"/><circle cx="1650.8" cy="1368.5" r="7.1"/><circle cx="1652.4" cy="1346.5" r="7.1"/><circle cx="1652.8" cy="1386.0" r="7.1"/><circle cx="1654.9" cy="1382.1" r="7.1"/><circle cx="1657.0" cy="1384.0" r="7.1"/><circle cx="1659.1" cy="1380.6" r="7.1"/><circle cx="1661.1" cy="1372.8" r="7.1"/><circle cx="1661.2" cy="1389.9" r="7.1"/><circle cx="1663.3" cy="1383.2" r="7.1"/><circle cx="1665.4" cy="1384.5" r="7.1"/><circle cx="1667.5" cy="1386.0" r="7.1"/><circle cx="1669.6" cy="1389.9" r="7.1"/><circle cx="1671.7" cy="1384.0" r="7.1"/><circle cx="1672.0" cy="1365.2" r="7.1"/><circle cx="1673.8" cy="1390.0" r="7.1"/><circle cx="1675.9" cy="1385.0" r="7.1"/><circle cx="1678.0" cy="1385.4" r="7.1"/><circle cx="1678.5" cy="1380.4" r="7.1"/><circle cx="1680.1" cy="1385.3" r="7.1"/><circle cx="1682.2" cy="1379.2" r="7.1"/><circle cx="1684.3" cy="1384.3" r="7.1"/><circle cx="1686.4" cy="1381.2" r="7.1"/><circle cx="1686.6" cy="1353.8" r="7.1"/><circle cx="1688.5" cy="1379.0" r="7.1"/><circle cx="1689.3" cy="1366.8" r="7.1"/><circle cx="1690.6" cy="1388.6" r="7.1"/><circle cx="1692.7" cy="1381.1" r="7.1"/><circle cx="1694.8" cy="1384.7" r="7.1"/><circle cx="1696.9" cy="1387.7" r="7.1"/><circle cx="1697.5" cy="1363.6" r="7.1"/><circle cx="1699.0" cy="1385.7" r="7.1"/><circle cx="1701.1" cy="1382.9" r="7.1"/><circle cx="1702.4" cy="1369.6" r="7.1"/><circle cx="1703.2" cy="1385.2" r="7.1"/><circle cx="1705.3" cy="1385.7" r="7.1"/><circle cx="1707.4" cy="1388.4" r="7.1"/><circle cx="1709.5" cy="1380.3" r="7.1"/><circle cx="1711.6" cy="1385.7" r="7.1"/><circle cx="1713.7" cy="1382.0" r="7.1"/><circle cx="1715.8" cy="1382.3" r="7.1"/><circle cx="1717.9" cy="1388.3" r="7.1"/><circle cx="1720.0" cy="1385.1" r="7.1"/><circle cx="1722.1" cy="1385.7" r="7.1"/><circle cx="1724.2" cy="1388.1" r="7.1"/><circle cx="1726.3" cy="1389.9" r="7.1"/><circle cx="1728.4" cy="1384.3" r="7.1"/><circle cx="1730.5" cy="1386.4" r="7.1"/><circle cx="1732.6" cy="1385.1" r="7.1"/><circle cx="1734.7" cy="1385.1" r="7.1"/><circle cx="1736.1" cy="1375.0" r="7.1"/><circle cx="1736.8" cy="1387.3" r="7.1"/><circle cx="1738.9" cy="1384.4" r="7.1"/><circle cx="1741.0" cy="1385.4" r="7.1"/><circle cx="1743.1" cy="1384.7" r="7.1"/><circle cx="1745.2" cy="1390.3" r="7.1"/><circle cx="1745.3" cy="1375.0" r="7.1"/><circle cx="1746.8" cy="1189.6" r="7.1"/><circle cx="1747.3" cy="1387.4" r="7.1"/><circle cx="1749.4" cy="1389.5" r="7.1"/><circle cx="1751.5" cy="1390.3" r="7.1"/><circle cx="1753.6" cy="1382.1" r="7.1"/><circle cx="1755.7" cy="1385.7" r="7.1"/><circle cx="1757.8" cy="1390.3" r="7.1"/><circle cx="1759.9" cy="1389.1" r="7.1"/><circle cx="1762.0" cy="1380.6" r="7.1"/><circle cx="1764.1" cy="1380.5" r="7.1"/><circle cx="1764.9" cy="1367.9" r="7.1"/><circle cx="1766.2" cy="1384.3" r="7.1"/><circle cx="1768.3" cy="1379.9" r="7.1"/><circle cx="1770.4" cy="1381.9" r="7.1"/><circle cx="1772.5" cy="1379.9" r="7.1"/><circle cx="1773.0" cy="1369.6" r="7.1"/><circle cx="1774.6" cy="1387.0" r="7.1"/><circle cx="1776.7" cy="1388.4" r="7.1"/><circle cx="1778.8" cy="1389.8" r="7.1"/><circle cx="1780.9" cy="1380.9" r="7.1"/><circle cx="1783.0" cy="1387.6" r="7.1"/><circle cx="1785.1" cy="1386.9" r="7.1"/><circle cx="1787.2" cy="1380.7" r="7.1"/><circle cx="1789.3" cy="1389.6" r="7.1"/><circle cx="1791.4" cy="1390.6" r="7.1"/><circle cx="1793.5" cy="1381.6" r="7.1"/><circle cx="1795.6" cy="1390.4" r="7.1"/><circle cx="1797.5" cy="1363.6" r="7.1"/><circle cx="1797.7" cy="1383.8" r="7.1"/><circle cx="1799.8" cy="1384.8" r="7.1"/><circle cx="1801.9" cy="1390.9" r="7.1"/><circle cx="1804.0" cy="1389.0" r="7.1"/><circle cx="1806.1" cy="1380.9" r="7.1"/><circle cx="1808.2" cy="1384.2" r="7.1"/><circle cx="1810.3" cy="1385.2" r="7.1"/><circle cx="1812.4" cy="1383.1" r="7.1"/><circle cx="1814.5" cy="1381.3" r="7.1"/><circle cx="1816.6" cy="1382.8" r="7.1"/><circle cx="1818.2" cy="1366.3" r="7.1"/><circle cx="1818.7" cy="1387.7" r="7.1"/><circle cx="1820.8" cy="1379.2" r="7.1"/><circle cx="1822.9" cy="1385.6" r="7.1"/><circle cx="1825.0" cy="1384.3" r="7.1"/><circle cx="1827.1" cy="1379.2" r="7.1"/><circle cx="1829.2" cy="1383.0" r="7.1"/><circle cx="1831.3" cy="1386.5" r="7.1"/><circle cx="1832.8" cy="1369.6" r="7.1"/><circle cx="1833.4" cy="1385.1" r="7.1"/><circle cx="1835.5" cy="1379.8" r="7.1"/><circle cx="1837.6" cy="1390.8" r="7.1"/><circle cx="1839.7" cy="1388.5" r="7.1"/><circle cx="1841.8" cy="1390.7" r="7.1"/><circle cx="1843.9" cy="1380.3" r="7.1"/><circle cx="1846.0" cy="1382.2" r="7.1"/><circle cx="1848.1" cy="1379.5" r="7.1"/><circle cx="1849.1" cy="1371.2" r="7.1"/><circle cx="1850.2" cy="1388.3" r="7.1"/><circle cx="1852.3" cy="1382.2" r="7.1"/><circle cx="1854.4" cy="1380.6" r="7.1"/><circle cx="1856.5" cy="1384.1" r="7.1"/><circle cx="1858.6" cy="1389.9" r="7.1"/><circle cx="1860.7" cy="1388.8" r="7.1"/><circle cx="1862.8" cy="1382.1" r="7.1"/><circle cx="1864.9" cy="1380.8" r="7.1"/><circle cx="1867.0" cy="1390.0" r="7.1"/><circle cx="1869.1" cy="1385.8" r="7.1"/><circle cx="1871.2" cy="1387.4" r="7.1"/><circle cx="1872.5" cy="1356.0" r="7.1"/><circle cx="1873.3" cy="1380.1" r="7.1"/><circle cx="1875.4" cy="1379.7" r="7.1"/><circle cx="1877.4" cy="1372.8" r="7.1"/><circle cx="1877.5" cy="1387.3" r="7.1"/><circle cx="1879.6" cy="1384.1" r="7.1"/><circle cx="1881.7" cy="1379.9" r="7.1"/><circle cx="1883.8" cy="1390.3" r="7.1"/><circle cx="1885.9" cy="1386.6" r="7.1"/><circle cx="1888.0" cy="1388.6" r="7.1"/><circle cx="1889.3" cy="1365.2" r="7.1"/><circle cx="1890.0" cy="1385.9" r="7.1"/><circle cx="1891.6" cy="1389.4" r="7.1"/><circle cx="1893.2" cy="1385.8" r="7.1"/><circle cx="1894.8" cy="1389.4" r="7.1"/><circle cx="1895.9" cy="1378.3" r="7.1"/><circle cx="1896.4" cy="1387.5" r="7.1"/><circle cx="1898.0" cy="1387.0" r="7.1"/><circle cx="1899.6" cy="1388.0" r="7.1"/><circle cx="1901.2" cy="1389.7" r="7.1"/><circle cx="1902.8" cy="1386.7" r="7.1"/><circle cx="1904.4" cy="1386.1" r="7.1"/><circle cx="1906.0" cy="1387.9" r="7.1"/><circle cx="1907.6" cy="1386.6" r="7.1"/><circle cx="1909.2" cy="1386.0" r="7.1"/><circle cx="1910.8" cy="1386.2" r="7.1"/><circle cx="1912.4" cy="1385.7" r="7.1"/><circle cx="1913.5" cy="1369.0" r="7.1"/><circle cx="1914.0" cy="1386.4" r="7.1"/><circle cx="1915.6" cy="1386.9" r="7.1"/><circle cx="1917.2" cy="1386.9" r="7.1"/><circle cx="1918.8" cy="1388.9" r="7.1"/><circle cx="1919.8" cy="1377.2" r="7.1"/><circle cx="1920.4" cy="1386.8" r="7.1"/><circle cx="1922.0" cy="1387.8" r="7.1"/><circle cx="1923.6" cy="1386.3" r="7.1"/><circle cx="1925.2" cy="1387.1" r="7.1"/><circle cx="1926.8" cy="1385.6" r="7.1"/><circle cx="1928.4" cy="1386.6" r="7.1"/><circle cx="1930.0" cy="1385.6" r="7.1"/><circle cx="1931.6" cy="1388.8" r="7.1"/><circle cx="1933.2" cy="1388.0" r="7.1"/><circle cx="1933.4" cy="1372.8" r="7.1"/><circle cx="1934.8" cy="1386.4" r="7.1"/><circle cx="1936.4" cy="1387.6" r="7.1"/><circle cx="1938.0" cy="1389.7" r="7.1"/><circle cx="1939.6" cy="1386.0" r="7.1"/><circle cx="1941.2" cy="1389.2" r="7.1"/><circle cx="1942.8" cy="1387.4" r="7.1"/><circle cx="1944.4" cy="1387.7" r="7.1"/><circle cx="1946.0" cy="1389.3" r="7.1"/><circle cx="1947.6" cy="1387.3" r="7.1"/><circle cx="1949.2" cy="1387.8" r="7.1"/><circle cx="1950.8" cy="1388.6" r="7.1"/><circle cx="1952.4" cy="1389.9" r="7.1"/><circle cx="1954.0" cy="1387.0" r="7.1"/><circle cx="1955.6" cy="1389.2" r="7.1"/><circle cx="1957.2" cy="1388.7" r="7.1"/><circle cx="1958.8" cy="1388.4" r="7.1"/><circle cx="1960.0" cy="1376.6" r="7.1"/><circle cx="1960.4" cy="1387.3" r="7.1"/><circle cx="1962.0" cy="1387.1" r="7.1"/><circle cx="1963.6" cy="1385.7" r="7.1"/><circle cx="1965.2" cy="1386.1" r="7.1"/><circle cx="1966.8" cy="1385.8" r="7.1"/><circle cx="1968.4" cy="1388.8" r="7.1"/><circle cx="1968.7" cy="1380.4" r="7.1"/><circle cx="1970.0" cy="1386.7" r="7.1"/><circle cx="1971.6" cy="1386.2" r="7.1"/><circle cx="1973.2" cy="1385.9" r="7.1"/><circle cx="1974.8" cy="1389.3" r="7.1"/><circle cx="1976.4" cy="1389.4" r="7.1"/><circle cx="1978.0" cy="1388.5" r="7.1"/><circle cx="1979.6" cy="1386.8" r="7.1"/><circle cx="1981.2" cy="1386.6" r="7.1"/><circle cx="1982.8" cy="1386.8" r="7.1"/><circle cx="1983.4" cy="1381.5" r="7.1"/><circle cx="1984.4" cy="1387.6" r="7.1"/><circle cx="1986.0" cy="1386.2" r="7.1"/><circle cx="1987.6" cy="1387.5" r="7.1"/><circle cx="1989.2" cy="1386.7" r="7.1"/><circle cx="1990.8" cy="1389.8" r="7.1"/><circle cx="1992.4" cy="1389.9" r="7.1"/><circle cx="1994.0" cy="1388.0" r="7.1"/><circle cx="1995.6" cy="1386.6" r="7.1"/><circle cx="1997.0" cy="1381.5" r="7.1"/><circle cx="1997.2" cy="1389.8" r="7.1"/><circle cx="1998.8" cy="1386.9" r="7.1"/><circle cx="2000.4" cy="1387.1" r="7.1"/><circle cx="2002.0" cy="1385.5" r="7.1"/><circle cx="2003.6" cy="1387.2" r="7.1"/><circle cx="2005.2" cy="1387.6" r="7.1"/><circle cx="2006.8" cy="1387.8" r="7.1"/><circle cx="2007.8" cy="1379.3" r="7.1"/><circle cx="2008.4" cy="1386.4" r="7.1"/><circle cx="2010.0" cy="1387.8" r="7.1"/><circle cx="2011.6" cy="1385.5" r="7.1"/><circle cx="2013.2" cy="1386.7" r="7.1"/><circle cx="2014.8" cy="1385.9" r="7.1"/><circle cx="2016.4" cy="1387.3" r="7.1"/><circle cx="2018.0" cy="1385.7" r="7.1"/><circle cx="2019.6" cy="1385.6" r="7.1"/><circle cx="2021.2" cy="1386.9" r="7.1"/><circle cx="2022.0" cy="1373.9" r="7.1"/><circle cx="2022.8" cy="1386.5" r="7.1"/><circle cx="2024.4" cy="1388.1" r="7.1"/><circle cx="2026.0" cy="1387.9" r="7.1"/><circle cx="2027.6" cy="1388.9" r="7.1"/><circle cx="2029.2" cy="1388.5" r="7.1"/><circle cx="2030.8" cy="1388.7" r="7.1"/><circle cx="2032.4" cy="1389.5" r="7.1"/><circle cx="2034.0" cy="1387.3" r="7.1"/><circle cx="2035.5" cy="1370.7" r="7.1"/><circle cx="2035.6" cy="1387.0" r="7.1"/><circle cx="2037.2" cy="1389.9" r="7.1"/><circle cx="2038.8" cy="1386.2" r="7.1"/><circle cx="2040.4" cy="1388.8" r="7.1"/><circle cx="2042.0" cy="1388.4" r="7.1"/><circle cx="2043.0" cy="1366.8" r="7.1"/><circle cx="2043.6" cy="1385.7" r="7.1"/><circle cx="2045.2" cy="1389.3" r="7.1"/><circle cx="2046.8" cy="1389.5" r="7.1"/><circle cx="2048.4" cy="1388.3" r="7.1"/><circle cx="2050.0" cy="1388.8" r="7.1"/><circle cx="2051.3" cy="1378.3" r="7.1"/><circle cx="2051.6" cy="1389.2" r="7.1"/><circle cx="2053.2" cy="1386.1" r="7.1"/><circle cx="2054.8" cy="1387.9" r="7.1"/><circle cx="2056.4" cy="1387.8" r="7.1"/><circle cx="2058.0" cy="1389.3" r="7.1"/><circle cx="2059.6" cy="1389.1" r="7.1"/><circle cx="2061.2" cy="1389.2" r="7.1"/><circle cx="2062.8" cy="1388.1" r="7.1"/><circle cx="2064.4" cy="1389.5" r="7.1"/><circle cx="2066.0" cy="1388.6" r="7.1"/><circle cx="2067.3" cy="1336.9" r="7.1"/><circle cx="2067.6" cy="1388.6" r="7.1"/><circle cx="2069.0" cy="1323.4" r="7.1"/><circle cx="2069.2" cy="1386.5" r="7.1"/><circle cx="2070.8" cy="1385.6" r="7.1"/><circle cx="2072.4" cy="1386.1" r="7.1"/><circle cx="2074.0" cy="1387.1" r="7.1"/><circle cx="2075.6" cy="1386.0" r="7.1"/><circle cx="2077.2" cy="1389.3" r="7.1"/><circle cx="2078.8" cy="1388.0" r="7.1"/><circle cx="2079.6" cy="1381.5" r="7.1"/><circle cx="2080.4" cy="1388.3" r="7.1"/><circle cx="2082.0" cy="1388.3" r="7.1"/><circle cx="2083.6" cy="1388.6" r="7.1"/><circle cx="2085.2" cy="1387.7" r="7.1"/><circle cx="2086.8" cy="1385.5" r="7.1"/><circle cx="2088.4" cy="1389.1" r="7.1"/><circle cx="2090.0" cy="1388.9" r="7.1"/><circle cx="2091.6" cy="1387.8" r="7.1"/><circle cx="2093.2" cy="1387.9" r="7.1"/><circle cx="2094.8" cy="1388.5" r="7.1"/><circle cx="2095.9" cy="1340.7" r="7.1"/><circle cx="2096.4" cy="1385.8" r="7.1"/><circle cx="2098.0" cy="1388.8" r="7.1"/><circle cx="2099.6" cy="1386.6" r="7.1"/><circle cx="2101.2" cy="1385.8" r="7.1"/><circle cx="2101.3" cy="1377.7" r="7.1"/><circle cx="2102.8" cy="1386.7" r="7.1"/><circle cx="2104.4" cy="1388.8" r="7.1"/><circle cx="2106.0" cy="1386.4" r="7.1"/><circle cx="2107.6" cy="1388.8" r="7.1"/><circle cx="2109.2" cy="1389.9" r="7.1"/><circle cx="2110.8" cy="1387.7" r="7.1"/><circle cx="2112.4" cy="1387.2" r="7.1"/><circle cx="2114.0" cy="1387.7" r="7.1"/><circle cx="2115.6" cy="1388.6" r="7.1"/><circle cx="2117.2" cy="1389.0" r="7.1"/><circle cx="2118.8" cy="1388.3" r="7.1"/><circle cx="2120.4" cy="1388.4" r="7.1"/><circle cx="2122.0" cy="1385.8" r="7.1"/><circle cx="2123.6" cy="1386.2" r="7.1"/><circle cx="2125.2" cy="1386.6" r="7.1"/><circle cx="2126.8" cy="1388.8" r="7.1"/><circle cx="2128.4" cy="1386.9" r="7.1"/><circle cx="2128.5" cy="1380.4" r="7.1"/><circle cx="2130.0" cy="1388.1" r="7.1"/><circle cx="2131.6" cy="1385.6" r="7.1"/><circle cx="2131.6" cy="1374.1" r="7.1"/><circle cx="2133.2" cy="1385.8" r="7.1"/><circle cx="2134.8" cy="1386.7" r="7.1"/><circle cx="2136.4" cy="1388.5" r="7.1"/><circle cx="2138.0" cy="1388.6" r="7.1"/><circle cx="2138.9" cy="1354.7" r="7.1"/><circle cx="2139.6" cy="1388.5" r="7.1"/><circle cx="2141.2" cy="1386.8" r="7.1"/><circle cx="2142.8" cy="1387.8" r="7.1"/><circle cx="2144.4" cy="1387.6" r="7.1"/><circle cx="2146.0" cy="1387.6" r="7.1"/><circle cx="2147.6" cy="1386.0" r="7.1"/><circle cx="2149.2" cy="1389.5" r="7.1"/><circle cx="2150.8" cy="1386.4" r="7.1"/><circle cx="2152.4" cy="1389.9" r="7.1"/><circle cx="2154.0" cy="1389.7" r="7.1"/><circle cx="2154.9" cy="1353.2" r="7.1"/><circle cx="2155.6" cy="1385.6" r="7.1"/><circle cx="2157.2" cy="1387.6" r="7.1"/><circle cx="2158.8" cy="1389.2" r="7.1"/><circle cx="2158.9" cy="1379.3" r="7.1"/><circle cx="2160.4" cy="1389.9" r="7.1"/><circle cx="2162.0" cy="1387.5" r="7.1"/><circle cx="2163.6" cy="1386.7" r="7.1"/><circle cx="2165.2" cy="1386.4" r="7.1"/><circle cx="2166.8" cy="1389.8" r="7.1"/><circle cx="2168.4" cy="1386.4" r="7.1"/><circle cx="2170.0" cy="1388.1" r="7.1"/><circle cx="2170.0" cy="1388.7" r="7.1"/><circle cx="2171.5" cy="1389.4" r="7.1"/><circle cx="2173.0" cy="1390.1" r="7.1"/><circle cx="2174.5" cy="1388.7" r="7.1"/><circle cx="2176.0" cy="1389.9" r="7.1"/><circle cx="2177.5" cy="1389.4" r="7.1"/><circle cx="2179.0" cy="1390.0" r="7.1"/><circle cx="2180.5" cy="1389.7" r="7.1"/><circle cx="2182.0" cy="1388.9" r="7.1"/><circle cx="2183.5" cy="1390.0" r="7.1"/><circle cx="2185.0" cy="1389.3" r="7.1"/><circle cx="2185.5" cy="1330.7" r="7.1"/><circle cx="2186.5" cy="1388.5" r="7.1"/><circle cx="2188.0" cy="1388.5" r="7.1"/><circle cx="2189.5" cy="1389.3" r="7.1"/><circle cx="2191.0" cy="1389.3" r="7.1"/><circle cx="2192.5" cy="1389.0" r="7.1"/><circle cx="2194.0" cy="1388.7" r="7.1"/><circle cx="2195.5" cy="1389.1" r="7.1"/><circle cx="2197.0" cy="1389.0" r="7.1"/><circle cx="2197.6" cy="1382.0" r="7.1"/><circle cx="2198.5" cy="1389.9" r="7.1"/><circle cx="2200.0" cy="1388.5" r="7.1"/><circle cx="2201.5" cy="1389.8" r="7.1"/><circle cx="2203.0" cy="1389.9" r="7.1"/><circle cx="2203.3" cy="1293.7" r="7.1"/><circle cx="2204.5" cy="1388.7" r="7.1"/><circle cx="2206.0" cy="1390.1" r="7.1"/><circle cx="2207.5" cy="1389.7" r="7.1"/><circle cx="2209.0" cy="1390.0" r="7.1"/><circle cx="2210.5" cy="1389.0" r="7.1"/><circle cx="2212.0" cy="1389.1" r="7.1"/><circle cx="2213.5" cy="1389.2" r="7.1"/><circle cx="2215.0" cy="1390.2" r="7.1"/><circle cx="2216.5" cy="1389.5" r="7.1"/><circle cx="2218.0" cy="1389.1" r="7.1"/><circle cx="2219.5" cy="1389.2" r="7.1"/><circle cx="2221.0" cy="1389.0" r="7.1"/><circle cx="2222.5" cy="1388.6" r="7.1"/><circle cx="2224.0" cy="1388.7" r="7.1"/><circle cx="2225.5" cy="1389.9" r="7.1"/><circle cx="2227.0" cy="1389.0" r="7.1"/><circle cx="2228.5" cy="1390.1" r="7.1"/><circle cx="2230.0" cy="1388.9" r="7.1"/><circle cx="2231.5" cy="1389.0" r="7.1"/><circle cx="2233.0" cy="1389.4" r="7.1"/><circle cx="2234.5" cy="1388.8" r="7.1"/><circle cx="2236.0" cy="1389.1" r="7.1"/><circle cx="2237.5" cy="1390.1" r="7.1"/><circle cx="2239.0" cy="1390.0" r="7.1"/><circle cx="2240.5" cy="1389.9" r="7.1"/><circle cx="2242.0" cy="1389.6" r="7.1"/><circle cx="2243.5" cy="1390.1" r="7.1"/><circle cx="2244.0" cy="1380.0" r="7.1"/><circle cx="2245.0" cy="1390.1" r="7.1"/><circle cx="2246.5" cy="1389.4" r="7.1"/><circle cx="2248.0" cy="1389.7" r="7.1"/><circle cx="2249.5" cy="1388.6" r="7.1"/><circle cx="2251.0" cy="1389.7" r="7.1"/><circle cx="2252.5" cy="1389.3" r="7.1"/><circle cx="2254.0" cy="1389.8" r="7.1"/><circle cx="2255.5" cy="1389.6" r="7.1"/><circle cx="2257.0" cy="1379.6" r="7.1"/><circle cx="2257.0" cy="1389.0" r="7.1"/><circle cx="2258.5" cy="1388.6" r="7.1"/><circle cx="2260.0" cy="1390.1" r="7.1"/><circle cx="2261.5" cy="1388.7" r="7.1"/><circle cx="2263.0" cy="1389.3" r="7.1"/><circle cx="2264.5" cy="1389.1" r="7.1"/><circle cx="2266.0" cy="1389.0" r="7.1"/><circle cx="2267.5" cy="1389.8" r="7.1"/><circle cx="2269.0" cy="1390.2" r="7.1"/><circle cx="2270.5" cy="1388.9" r="7.1"/><circle cx="2272.0" cy="1389.6" r="7.1"/><circle cx="2273.5" cy="1389.0" r="7.1"/><circle cx="2275.0" cy="1389.4" r="7.1"/><circle cx="2276.0" cy="1383.4" r="7.1"/><circle cx="2276.5" cy="1389.2" r="7.1"/><circle cx="2278.0" cy="1388.8" r="7.1"/><circle cx="2279.5" cy="1388.8" r="7.1"/><circle cx="2281.0" cy="1388.9" r="7.1"/><circle cx="2282.5" cy="1390.0" r="7.1"/><circle cx="2284.0" cy="1389.3" r="7.1"/><circle cx="2285.5" cy="1388.9" r="7.1"/><circle cx="2287.0" cy="1390.0" r="7.1"/><circle cx="2288.5" cy="1390.2" r="7.1"/><circle cx="2290.0" cy="1389.3" r="7.1"/><circle cx="2291.5" cy="1388.7" r="7.1"/><circle cx="2292.3" cy="1381.0" r="7.1"/><circle cx="2293.0" cy="1388.8" r="7.1"/><circle cx="2294.5" cy="1388.7" r="7.1"/><circle cx="2296.0" cy="1389.1" r="7.1"/><circle cx="2297.5" cy="1388.7" r="7.1"/><circle cx="2299.0" cy="1388.9" r="7.1"/><circle cx="2300.5" cy="1388.9" r="7.1"/><circle cx="2302.0" cy="1389.5" r="7.1"/><circle cx="2303.5" cy="1390.0" r="7.1"/><circle cx="2304.0" cy="1382.7" r="7.1"/><circle cx="2305.0" cy="1389.8" r="7.1"/><circle cx="2306.5" cy="1389.2" r="7.1"/><circle cx="2308.0" cy="1389.2" r="7.1"/><circle cx="2309.5" cy="1389.4" r="7.1"/><circle cx="2311.0" cy="1389.1" r="7.1"/><circle cx="2312.5" cy="1389.1" r="7.1"/><circle cx="2314.0" cy="1388.6" r="7.1"/><circle cx="2315.5" cy="1389.0" r="7.1"/><circle cx="2317.0" cy="1390.1" r="7.1"/><circle cx="2318.5" cy="1388.7" r="7.1"/><circle cx="2320.0" cy="1389.4" r="7.1"/><circle cx="2321.5" cy="1389.6" r="7.1"/><circle cx="2323.0" cy="1390.0" r="7.1"/><circle cx="2324.5" cy="1388.9" r="7.1"/><circle cx="2326.0" cy="1389.0" r="7.1"/><circle cx="2327.5" cy="1388.9" r="7.1"/><circle cx="2329.0" cy="1389.2" r="7.1"/><circle cx="2330.5" cy="1389.3" r="7.1"/><circle cx="2332.0" cy="1390.1" r="7.1"/><circle cx="2333.5" cy="1389.9" r="7.1"/><circle cx="2335.0" cy="1390.0" r="7.1"/><circle cx="2336.5" cy="1388.5" r="7.1"/><circle cx="2338.0" cy="1388.6" r="7.1"/><circle cx="2339.5" cy="1389.7" r="7.1"/><circle cx="2341.0" cy="1390.0" r="7.1"/><circle cx="2342.5" cy="1389.3" r="7.1"/><circle cx="2344.0" cy="1389.5" r="7.1"/><circle cx="2345.5" cy="1388.5" r="7.1"/><circle cx="2347.0" cy="1389.2" r="7.1"/><circle cx="2348.5" cy="1390.1" r="7.1"/><circle cx="2350.0" cy="1389.9" r="7.1"/><circle cx="2351.5" cy="1390.0" r="7.1"/><circle cx="2353.0" cy="1390.2" r="7.1"/><circle cx="2354.5" cy="1388.9" r="7.1"/><circle cx="2356.0" cy="1388.7" r="7.1"/><circle cx="2357.5" cy="1388.8" r="7.1"/><circle cx="2359.0" cy="1389.4" r="7.1"/><circle cx="2360.5" cy="1389.7" r="7.1"/><circle cx="2362.0" cy="1390.1" r="7.1"/><circle cx="2363.5" cy="1389.7" r="7.1"/><circle cx="2365.0" cy="1389.6" r="7.1"/><circle cx="2366.5" cy="1389.8" r="7.1"/><circle cx="2368.0" cy="1389.3" r="7.1"/><circle cx="2369.5" cy="1389.4" r="7.1"/><circle cx="2371.0" cy="1388.6" r="7.1"/><circle cx="2372.5" cy="1389.8" r="7.1"/><circle cx="2374.0" cy="1388.9" r="7.1"/><circle cx="2375.5" cy="1390.1" r="7.1"/><circle cx="2377.0" cy="1389.6" r="7.1"/><circle cx="2378.5" cy="1389.0" r="7.1"/><circle cx="2380.0" cy="1388.7" r="7.1"/><circle cx="2381.5" cy="1388.9" r="7.1"/><circle cx="2383.0" cy="1389.6" r="7.1"/><circle cx="2384.5" cy="1389.7" r="7.1"/><circle cx="2386.0" cy="1388.7" r="7.1"/><circle cx="2387.5" cy="1388.6" r="7.1"/><circle cx="2389.0" cy="1389.4" r="7.1"/><circle cx="2390.5" cy="1389.5" r="7.1"/><circle cx="2391.0" cy="1389.7" r="7.1"/></g>
<text x="124.18" y="52.80" font-size="26.89" fill="#a1abbc" stroke="#a1abbc" stroke-width="0.55" textLength="74.13" lengthAdjust="spacingAndGlyphs">Home</text>
<text x="220.92" y="52.80" font-size="26.89" fill="#a1abbc" stroke="#a1abbc" stroke-width="0.55" textLength="85.39" lengthAdjust="spacingAndGlyphs">Search</text>
<text x="328.22" y="52.80" font-size="26.89" fill="#a1abbc" stroke="#a1abbc" stroke-width="0.55" textLength="151.70" lengthAdjust="spacingAndGlyphs">My Catalogs</text>
<text x="502.34" y="52.80" font-size="26.89" fill="#a1abbc" stroke="#a1abbc" stroke-width="0.55" textLength="118.27" lengthAdjust="spacingAndGlyphs">My Graph</text>
<text x="644.60" y="52.80" font-size="26.89" fill="#a1abbc" stroke="#a1abbc" stroke-width="0.55" textLength="97.69" lengthAdjust="spacingAndGlyphs">Analysis</text>
<text x="766.47" y="52.80" font-size="26.89" fill="#a1abbc" stroke="#a1abbc" stroke-width="0.55" textLength="162.92" lengthAdjust="spacingAndGlyphs">Time Analysis</text>
<text x="952.12" y="52.80" font-size="26.89" fill="#a1abbc" stroke="#a1abbc" stroke-width="0.55" textLength="85.43" lengthAdjust="spacingAndGlyphs">LogOut</text>
<text x="1047.38" y="185.90" font-size="18.46" fill="#6a6a6a" textLength="48.45" lengthAdjust="spacingAndGlyphs">Node</text>
<text x="1251.31" y="185.90" font-size="18.46" fill="#6a6a6a" textLength="114.94" lengthAdjust="spacingAndGlyphs">Catalog Ba...</text>
<text x="1455.04" y="185.90" font-size="18.46" fill="#6a6a6a" textLength="109.64" lengthAdjust="spacingAndGlyphs">Catalog Ex...</text>
<text x="1049.00" y="216.00" font-size="24.27" fill="#242424" textLength="75.68" lengthAdjust="spacingAndGlyphs">Article</text>
<text x="1252.70" y="216.00" font-size="24.27" fill="#242424" textLength="66.53" lengthAdjust="spacingAndGlyphs">tx-mt</text>
<text x="1456.53" y="216.00" font-size="24.27" fill="#242424" textLength="74.11" lengthAdjust="spacingAndGlyphs">tx-m...</text>
<text x="1664.10" y="215.20" font-size="21.51" fill="#ffffff" textLength="88.83" lengthAdjust="spacingAndGlyphs">ANALYZE</text>
<text x="387.91" y="323.20" font-size="21.80" fill="#6a6a6a" textLength="255.03" lengthAdjust="spacingAndGlyphs">BETWENNES CENTRALITY</text>
<text x="690.91" y="323.20" font-size="21.80" fill="#6a6a6a" textLength="249.93" lengthAdjust="spacingAndGlyphs">CLOSENESS CENTRALITY</text>
<text x="988.99" y="323.20" font-size="21.80" fill="#6a6a6a" textLength="276.85" lengthAdjust="spacingAndGlyphs">EIGENVECTOR CENTRALITY</text>
<text x="1313.63" y="323.20" font-size="21.80" fill="#6a6a6a" textLength="230.50" lengthAdjust="spacingAndGlyphs">INDEGREE CENTRALITY</text>
<text x="1593.01" y="323.20" font-size="21.80" fill="#6a6a6a" textLength="253.53" lengthAdjust="spacingAndGlyphs">OUTDEGREE CENTRALITY</text>
<text x="1894.15" y="323.20" font-size="21.80" fill="#3a77d2" textLength="112.79" lengthAdjust="spacingAndGlyphs">PAGERANK</text>
<text x="2056.50" y="323.20" font-size="21.80" fill="#6a6a6a" textLength="138.24" lengthAdjust="spacingAndGlyphs">ARTICLERANK</text>
<text x="2242.54" y="323.20" font-size="21.80" fill="#6a6a6a" textLength="247.91" lengthAdjust="spacingAndGlyphs">HARMONIC CENTRALITY</text>
<text x="1056.40" y="395.20" font-size="21.37" fill="#6a6a6a" textLength="145.14" lengthAdjust="spacingAndGlyphs">ARTICLE DATA</text>
<text x="1251.80" y="395.20" font-size="21.37" fill="#6a6a6a" textLength="147.14" lengthAdjust="spacingAndGlyphs">AUTHOR DATA</text>
<text x="1450.00" y="395.20" font-size="21.37" fill="#3a77d2" textLength="160.22" lengthAdjust="spacingAndGlyphs">ARTICLE CHART</text>
<text x="1659.40" y="395.20" font-size="21.37" fill="#6a6a6a" textLength="164.43" lengthAdjust="spacingAndGlyphs">AUTHOR CHART</text>
<text x="1388.97" y="458.40" font-size="22.82" fill="#3a77d2" textLength="77.03" lengthAdjust="spacingAndGlyphs">FILTERS</text>
<text x="1366.43" y="511.20" font-size="19.33" fill="#666666" font-weight="bold" textLength="122.73" lengthAdjust="spacingAndGlyphs">Articles Chart</text>
<text x="1422.44" y="560.20" font-size="18.60" fill="#666666" textLength="78.38" lengthAdjust="spacingAndGlyphs">Pagerank</text>
<text x="1255.00" y="1439.70" font-size="18.17" fill="#666666" textLength="401.15" lengthAdjust="spacingAndGlyphs">Articles sorted by publication_date in ASC order</text>
</svg>
</body></html>
